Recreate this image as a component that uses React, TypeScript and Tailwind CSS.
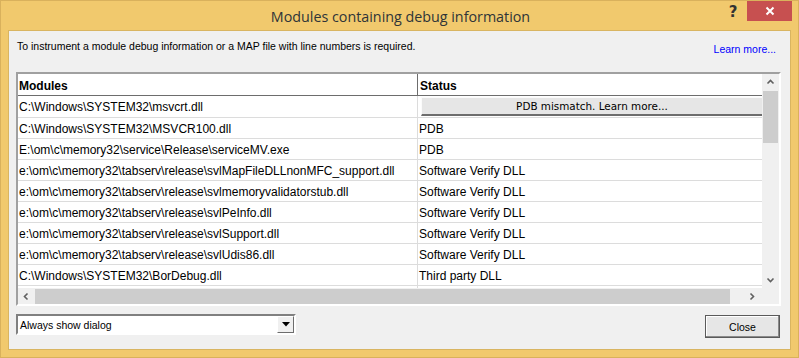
import React from "react";

const ROWS: [string, string | null][] = [
  ["C:\\Windows\\SYSTEM32\\msvcrt.dll", null],
  ["C:\\Windows\\SYSTEM32\\MSVCR100.dll", "PDB"],
  ["E:\\om\\c\\memory32\\service\\Release\\serviceMV.exe", "PDB"],
  ["e:\\om\\c\\memory32\\tabserv\\release\\svlMapFileDLLnonMFC_support.dll", "Software Verify DLL"],
  ["e:\\om\\c\\memory32\\tabserv\\release\\svlmemoryvalidatorstub.dll", "Software Verify DLL"],
  ["e:\\om\\c\\memory32\\tabserv\\release\\svlPeInfo.dll", "Software Verify DLL"],
  ["e:\\om\\c\\memory32\\tabserv\\release\\svlSupport.dll", "Software Verify DLL"],
  ["e:\\om\\c\\memory32\\tabserv\\release\\svlUdis86.dll", "Software Verify DLL"],
  ["C:\\Windows\\SYSTEM32\\BorDebug.dll", "Third party DLL"],
  ["", ""],
];

const Chevron = ({ dir }: { dir: "up" | "down" | "left" | "right" }) => {
  const d = {
    up: "M1.5 5.5 L4.5 2.5 L7.5 5.5",
    down: "M1.5 3.5 L4.5 6.5 L7.5 3.5",
    left: "M5.5 1.5 L2.5 4.5 L5.5 7.5",
    right: "M3.5 1.5 L6.5 4.5 L3.5 7.5",
  }[dir];
  return (
    <svg width="9" height="9" viewBox="0 0 9 9">
      <path d={d} fill="none" stroke="#606060" strokeWidth="1.6" />
    </svg>
  );
};

export default function App() {
  return (
    <div className="w-[799px] h-[358px] bg-[#f1c96d] border border-[#d9b15c] flex flex-col overflow-hidden font-['Liberation_Sans',sans-serif] text-black">
      {/* ─── TITLE BAR ─── */}
      <div className="h-[29px] flex items-start">
        <div className="flex-1 text-center pl-[81px] pt-[5px] text-[14.3px] text-[#2e3438] font-['Open_Sans',sans-serif]">
          Modules containing debug information
        </div>
        <div className="w-[28px] pt-[2px] text-center text-[15px] font-bold text-[#333] font-['DejaVu_Sans',sans-serif] leading-[18px]">
          ?
        </div>
        <div className="w-[45px] h-[20px] bg-[#c75050] flex items-center justify-center mr-[6px]">
          <svg width="10" height="10" viewBox="0 0 10 10">
            <path d="M1.5 1.5 L8.5 8.5 M8.5 1.5 L1.5 8.5" stroke="white" strokeWidth="2" />
          </svg>
        </div>
      </div>

      {/* ─── CLIENT AREA ─── */}
      <div className="mx-[7px] mb-[7px] flex-1 bg-[#f0f0f0] border border-[#d9b561] flex flex-col px-[7px]">
        <div className="h-[41px] flex items-start justify-between">
          <p className="pt-[9px] pl-[1px] text-[10.5px] leading-[13px]">
            To instrument a module debug information or a MAP file with line numbers is required.
          </p>
          <span className="pt-[12px] pr-[7px] text-[10.5px] leading-[13px] text-[#0000ff]">Learn more...</span>
        </div>

        {/* ─── LIST ─── */}
        <div className="w-[765px] h-[234px] border-2 border-t-[#a0a0a0] border-l-[#a0a0a0] border-r-white border-b-white bg-white grid grid-cols-[744px_17px] grid-rows-[214px_16px] text-[12px]">
          <div className="overflow-hidden flex flex-col">
            <div className="h-[22px] shrink-0 flex border-b border-[#6d6d6d] bg-white font-bold">
              <div className="w-[400px] border-r border-[#6d6d6d] pl-[1px] leading-[24px]">Modules</div>
              <div className="flex-1 border-l border-white pl-[1px] leading-[24px]">Status</div>
            </div>
            {ROWS.map(([path, status], i) => (
              <div
                key={i}
                className={`${i === 0 ? "h-[22px]" : "h-[21px]"} shrink-0 flex border-b border-[#dcdcdc]`}
              >
                <div className="w-[400px] border-r border-[#dcdcdc] pl-[1px] leading-[23px] whitespace-nowrap overflow-hidden">
                  {path}
                </div>
                <div className="flex-1 pl-[1px] leading-[23px] whitespace-nowrap overflow-hidden">
                  {status === null ? (
                    <div className="ml-[2px] mt-[1px] h-[19px] bg-[#e6e6e6] border-t border-l border-[#fbfbfb] border-b-2 border-b-[#6d6d6d] flex items-center justify-center font-['DejaVu_Sans',sans-serif] text-[10.4px] leading-[19px]">
                      PDB mismatch. Learn more...
                    </div>
                  ) : (
                    status
                  )}
                </div>
              </div>
            ))}
          </div>

          {/* vertical scrollbar */}
          <div className="bg-[#f0f0f0] flex flex-col items-center">
            <div className="h-[17px] flex items-center justify-center">
              <Chevron dir="up" />
            </div>
            <div className="w-[15px] h-[52px] bg-[#cdcdcd]" />
            <div className="flex-1" />
            <div className="h-[17px] flex items-center justify-center">
              <Chevron dir="down" />
            </div>
          </div>

          {/* horizontal scrollbar */}
          <div className="bg-[#f0f0f0] flex items-center">
            <div className="w-[17px] flex justify-center">
              <Chevron dir="left" />
            </div>
            <div className="w-[695px] h-[15px] bg-[#cdcdcd]" />
            <div className="flex-1 flex justify-end pr-[6px]">
              <Chevron dir="right" />
            </div>
          </div>
          <div className="bg-[#f0f0f0]" />
        </div>

        {/* ─── FOOTER ─── */}
        <div className="mt-[8px] flex items-start justify-between pr-[3px]">
          <div className="w-[280px] h-[21px] border-2 border-t-[#808080] border-l-[#808080] border-r-white border-b-white bg-white flex items-center">
            <span className="flex-1 pl-[2px] text-[10.5px] leading-[14px]">Always show dialog</span>
            <div className="w-[17px] h-[17px] bg-[#f0f0f0] border border-t-white border-l-white border-r-[#6d6d6d] border-b-[#6d6d6d] flex items-center justify-center">
              <svg width="8" height="5" viewBox="0 0 8 5">
                <path d="M0 0 H8 L4 4.5 Z" fill="black" />
              </svg>
            </div>
          </div>
          <button className="mt-[1px] w-[75px] h-[23px] border border-[#5a5a5a] bg-[#e6e6e6] shadow-[inset_-1px_-1px_0_#8a8a8a,inset_1px_1px_0_#ffffff] text-[10.5px] leading-[20px]">
            Close
          </button>
        </div>
      </div>
    </div>
  );
}
